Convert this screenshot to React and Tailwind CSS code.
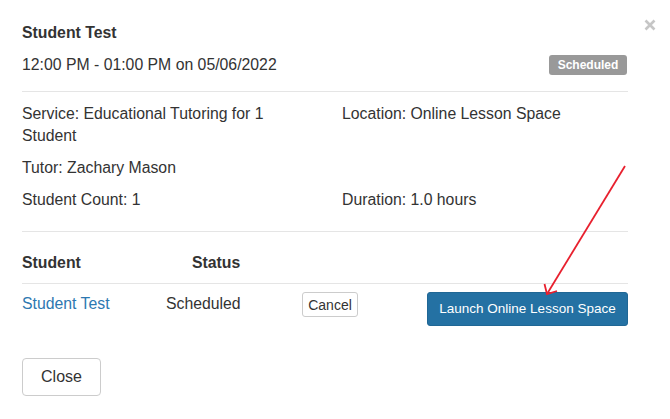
import React from 'react';

const App = () => {
  return (
    <div className="relative w-[670px] h-[419px] bg-white text-[#333] font-['Liberation_Sans',Arial,sans-serif] text-[15.8px] leading-[22px] overflow-hidden">
      {/* close x */}
      <button className="absolute top-[19px] left-[644px] w-[12px] h-[12px]">
        <svg width="12" height="12" viewBox="0 0 12 12">
          <path d="M1.5 1.5 L10.5 10.5 M10.5 1.5 L1.5 10.5" stroke="#c6c6c6" strokeWidth="2.6" />
        </svg>
      </button>

      <div className="pt-[22px] pl-[22px] pr-[42px]">
        <h4 className="font-bold">Student Test</h4>
        <div className="flex items-center justify-between mt-[10px]">
          <span>12:00 PM - 01:00 PM on 05/06/2022</span>
          <span className="flex items-center justify-center w-[78px] h-[20px] rounded-[3px] bg-[#999] text-white text-[12px] font-bold mr-[1px]">
            Scheduled
          </span>
        </div>

        <hr className="mt-[15px] border-t border-[#e5e5e5]" />

        <div className="grid grid-cols-[320px_1fr] gap-y-[10px] mt-[11px]">
          <div className="pr-[30px]">Service: Educational Tutoring for 1 Student</div>
          <div>Location: Online Lesson Space</div>
          <div>Tutor: Zachary Mason</div>
          <div></div>
          <div>Student Count: 1</div>
          <div>Duration: 1.0 hours</div>
        </div>

        <hr className="mt-[20px] border-t border-[#e5e5e5]" />

        <div className="flex mt-[20px] font-bold">
          <div className="w-[170px]">Student</div>
          <div>Status</div>
        </div>

        <hr className="mt-[9px] border-t border-[#e5e5e5]" />

        <div className="flex items-start mt-[8px]">
          <a className="w-[144px] mt-[1px] text-[#2d78b1]">Student Test</a>
          <span className="w-[136px] mt-[1px]">Scheduled</span>
          <button className="w-[56px] h-[25px] border border-[#ccc] rounded-[3px] text-[14px] leading-none bg-white">
            Cancel
          </button>
          <button className="ml-auto w-[201px] h-[34px] rounded-[3px] bg-[#2471a3] border border-[#206795] text-white text-[13.5px] leading-none">
            Launch Online Lesson Space
          </button>
        </div>

        <button className="mt-[32px] w-[79px] h-[38px] border border-[#ccc] rounded-[4px] bg-white text-[16px] leading-none">
          Close
        </button>
      </div>

      {/* annotation arrow */}
      <svg className="absolute left-0 top-0 pointer-events-none" width="670" height="419">
        <path d="M625 166 L547 294" stroke="#e8202e" strokeWidth="1.8" fill="none" />
        <path d="M544.5 284 L547 294 L557 291" stroke="#e8202e" strokeWidth="1.8" fill="none" />
      </svg>
    </div>
  );
};

export default App;
